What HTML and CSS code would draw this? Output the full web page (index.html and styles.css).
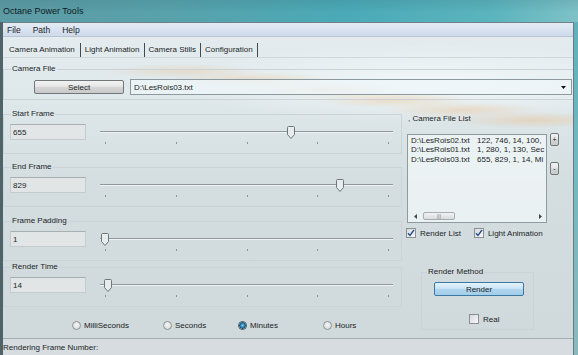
FILE: index.html
```html
<!DOCTYPE html>
<html lang="en">
<head>
    <meta charset="UTF-8">
    <title>Octane Power Tools</title>
    <link rel="stylesheet" href="styles.css">
</head>
<body>
    <div class="window">
        <div class="titlebar">Octane Power Tools</div>
        <div class="frame">
            <div class="client">
                <div class="menubar">
                    <span>File</span>
                    <span>Path</span>
                    <span>Help</span>
                </div>
                <div class="tabs">
                    <span class="tab active">Camera Animation</span>
                    <span class="tab">Light Animation</span>
                    <span class="tab">Camera Stills</span>
                    <span class="tab">Configuration</span>
                </div>
                <div class="panel">
                    <fieldset class="group file-group">
                        <legend>Camera File</legend>
                        <div class="file-row">
                            <button class="btn select">Select</button>
                            <div class="combo">
                                <span>D:\LesRois03.txt</span>
                                <svg width="5" height="3" viewBox="0 0 5 3"><path d="M0 0h5L2.5 3z" fill="#111"/></svg>
                            </div>
                        </div>
                    </fieldset>
                    <div class="columns">
                        <div class="left">
                            <fieldset class="group frame-group g1">
                                <legend>Start Frame</legend>
                                <div class="field-row">
                                    <div class="textbox">655</div>
                                    <div class="slider" style="--v:.655">
                                        <div class="track"></div>
                                        <svg class="thumb" width="8" height="13" viewBox="0 0 8 13"><path d="M1.5.5h5a1 1 0 0 1 1 1v7L4 12.5.5 8.5v-7a1 1 0 0 1 1-1z" fill="#e9eced" stroke="#6c777b"/></svg>
                                        <div class="ticks"><i></i><i></i><i></i><i></i><i></i></div>
                                    </div>
                                </div>
                            </fieldset>
                            <fieldset class="group frame-group g2">
                                <legend>End Frame</legend>
                                <div class="field-row">
                                    <div class="textbox">829</div>
                                    <div class="slider" style="--v:.829">
                                        <div class="track"></div>
                                        <svg class="thumb" width="8" height="13" viewBox="0 0 8 13"><path d="M1.5.5h5a1 1 0 0 1 1 1v7L4 12.5.5 8.5v-7a1 1 0 0 1 1-1z" fill="#e9eced" stroke="#6c777b"/></svg>
                                        <div class="ticks"><i></i><i></i><i></i><i></i><i></i></div>
                                    </div>
                                </div>
                            </fieldset>
                            <fieldset class="group frame-group g3">
                                <legend>Frame Padding</legend>
                                <div class="field-row">
                                    <div class="textbox">1</div>
                                    <div class="slider" style="--v:0">
                                        <div class="track"></div>
                                        <svg class="thumb" width="8" height="13" viewBox="0 0 8 13"><path d="M1.5.5h5a1 1 0 0 1 1 1v7L4 12.5.5 8.5v-7a1 1 0 0 1 1-1z" fill="#e9eced" stroke="#6c777b"/></svg>
                                        <div class="ticks"><i></i><i></i><i></i><i></i><i></i></div>
                                    </div>
                                </div>
                            </fieldset>
                            <fieldset class="group frame-group g4">
                                <legend>Render Time</legend>
                                <div class="field-row">
                                    <div class="textbox">14</div>
                                    <div class="slider" style="--v:.01">
                                        <div class="track"></div>
                                        <svg class="thumb" width="8" height="13" viewBox="0 0 8 13"><path d="M1.5.5h5a1 1 0 0 1 1 1v7L4 12.5.5 8.5v-7a1 1 0 0 1 1-1z" fill="#e9eced" stroke="#6c777b"/></svg>
                                        <div class="ticks"><i></i><i></i><i></i><i></i><i></i></div>
                                    </div>
                                </div>
                            </fieldset>
                            <div class="units">
                                <span class="radio-item"><span class="radio"></span>MilliSeconds</span>
                                <span class="radio-item"><span class="radio"></span>Seconds</span>
                                <span class="radio-item"><span class="radio on"></span>Minutes</span>
                                <span class="radio-item"><span class="radio"></span>Hours</span>
                            </div>
                        </div>
                        <div class="right">
                            <div class="list-caption">, Camera File List</div>
                            <div class="list-row">
                                <div class="listbox">
                                    <div class="list-items">
                                        <div class="item"><span class="name">D:\LesRois02.txt</span><span>122, 746, 14, 100,</span></div>
                                        <div class="item"><span class="name">D:\LesRois01.txt</span><span>1, 280, 1, 130, Sec</span></div>
                                        <div class="item"><span class="name">D:\LesRois03.txt</span><span>655, 829, 1, 14, Mi</span></div>
                                    </div>
                                    <div class="hscroll">
                                        <svg width="3" height="5" viewBox="0 0 3 5"><path d="M3 0v5L0 2.5z" fill="#444"/></svg>
                                        <div class="hthumb"><span>|||</span></div>
                                        <svg class="arr-right" width="3" height="5" viewBox="0 0 3 5"><path d="M0 0v5l3-2.5z" fill="#444"/></svg>
                                    </div>
                                </div>
                                <div class="list-buttons">
                                    <button class="btn small plus">+</button>
                                    <button class="btn small minus">-</button>
                                </div>
                            </div>
                            <div class="checks">
                                <span class="check-item"><span class="checkbox"><svg width="8" height="8" viewBox="0 0 8 8"><path d="M1 4.2l2 2.2L7 1" fill="none" stroke="#23508a" stroke-width="1.4"/></svg></span>Render List</span>
                                <span class="check-item"><span class="checkbox"><svg width="8" height="8" viewBox="0 0 8 8"><path d="M1 4.2l2 2.2L7 1" fill="none" stroke="#23508a" stroke-width="1.4"/></svg></span>Light Animation</span>
                            </div>
                            <fieldset class="group render-group">
                                <legend>Render Method</legend>
                                <div class="render-body">
                                    <button class="btn render">Render</button>
                                    <span class="check-item real"><span class="checkbox"></span>Real</span>
                                </div>
                            </fieldset>
                        </div>
                    </div>
                </div>
                <div class="statusbar">Rendering Frame Number:</div>
            </div>
        </div>
    </div>
</body>
</html>
```

FILE: styles.css
```css
* {
    box-sizing: border-box;
}
body {
    margin: 0;
    font-family: "Liberation Sans", Arial, sans-serif;
    font-size: 8px;
    color: #1c1e1f;
}
.window {
    width: 578px;
    height: 355px;
    display: flex;
    flex-direction: column;
    overflow: hidden;
}
.titlebar {
    height: 22px;
    line-height: 22px;
    padding-left: 3px;
    font-size: 9px;
    color: #0f1a1d;
    background:
        linear-gradient(180deg, rgba(40,90,100,0.15), rgba(255,255,255,0) 60%),
        linear-gradient(90deg, #5d9ba4 0%, #58a2ac 30%, #4aaab7 60%, #5bb4be 85%, #7ec2c7 100%);
}
.frame {
    flex: 1;
    display: flex;
    border-left: 3px solid #4f6369;
    padding-right: 4px;
    background: linear-gradient(180deg, #5eb0ba, #71b9c0 40%, #8ab9bd 100%);
}
.client {
    flex: 1;
    display: flex;
    flex-direction: column;
    border-top: 1px solid #6f8187;
    border-right: 1px solid #6a7c82;
    background:
        radial-gradient(ellipse 80px 7px at 180px 48px, rgba(236,192,140,0.35), rgba(236,192,140,0) 100%),
        radial-gradient(ellipse 80px 8px at 250px 57px, rgba(236,192,140,0.4), rgba(236,192,140,0) 100%),
        radial-gradient(ellipse 80px 8px at 320px 67px, rgba(236,192,140,0.4), rgba(236,192,140,0) 100%),
        radial-gradient(ellipse 80px 8px at 390px 77px, rgba(236,192,140,0.4), rgba(236,192,140,0) 100%),
        radial-gradient(ellipse 80px 8px at 460px 87px, rgba(236,192,140,0.4), rgba(236,192,140,0) 100%),
        radial-gradient(ellipse 80px 8px at 530px 97px, rgba(236,192,140,0.45), rgba(236,192,140,0) 100%),
        radial-gradient(ellipse 260px 40px at 430px 60px, rgba(250,255,255,0.7), rgba(250,255,255,0) 100%),
        linear-gradient(180deg, #e4ecef 0, #dfe8eb 70px, #d4dde0 160px, #cfd8da 100%);
}
.menubar {
    height: 14px;
    display: flex;
    align-items: center;
    gap: 12px;
    padding-left: 4px;
    font-size: 8.5px;
    background: linear-gradient(180deg, #e4ebf5, #cedaea);
    border-bottom: 1px solid #b9c5d3;
}
.tabs {
    height: 20px;
    display: flex;
    align-items: flex-end;
    padding-left: 2px;
}
.tab {
    height: 14px;
    line-height: 13px;
    padding: 0 4px 0 4px;
    border-right: 1px solid #3f4b50;
}
.tab.active {
    padding-left: 4px;
    padding-right: 5px;
}
.panel {
    flex: 1;
    border-top: 1px solid #d0d8db;
}
.group {
    margin: 0;
    padding: 0;
    min-width: 0;
    border: 1px solid #cbd3d6;
}
.group legend {
    padding: 0 1px;
    margin-left: 7px;
    line-height: 12px;
    height: 12px;
}
.file-group {
    margin-top: 5px;
    border-right: 0;
}
.file-row {
    display: flex;
    align-items: center;
    height: 16px;
    margin: 4px 1px 4px 30px;
}
.btn {
    font-family: "Liberation Sans", Arial, sans-serif;
    font-size: 8px;
    color: #1c1e1f;
    padding: 0;
    border: 1px solid #727779;
    border-radius: 2px;
    background: linear-gradient(180deg, #f2f2f2 0%, #e6e6e6 45%, #d4d4d4 55%, #c9c9c9 100%);
}
.select {
    width: 90px;
    height: 14px;
}
.combo {
    flex: 1;
    height: 16px;
    margin-left: 6px;
    display: flex;
    align-items: center;
    justify-content: space-between;
    padding: 0 5px 0 3px;
    border: 1px solid #8c999e;
    background: rgba(238,246,249,0.75);
}
.columns {
    display: flex;
}
.left {
    width: 399px;
}
.frame-group {
    width: 399px;
}
.g1 { margin-top: 8px; }
.g2 { margin-top: 7px; }
.g3 { margin-top: 8px; }
.g4 { margin-top: 0; }
.field-row {
    display: flex;
    padding: 4px 8px 7px 6px;
}
.textbox {
    width: 76px;
    height: 16px;
    line-height: 15px;
    padding-left: 2px;
    border: 1px solid #c5cccf;
    border-top-color: #a7afb2;
    background: rgba(226,229,230,0.9);
}
.slider {
    position: relative;
    flex: 1;
    height: 22px;
    margin-left: 14px;
}
.track {
    position: absolute;
    left: 0;
    right: 0;
    top: 7px;
    height: 2px;
    border-top: 1px solid #8f999d;
    border-bottom: 1px solid #eef2f3;
}
.thumb {
    position: absolute;
    top: 2px;
    left: calc(5px + var(--v) * (100% - 9px));
    transform: translateX(-50%);
}
.ticks {
    position: absolute;
    left: 0;
    right: 0;
    top: 18px;
    display: flex;
    justify-content: space-between;
    padding: 0 4px 0 5px;
}
.ticks i {
    width: 1px;
    height: 2px;
    background: #8b9497;
}
.units {
    display: grid;
    grid-template-columns: 91px 75px 85px auto;
    height: 31px;
    padding: 13px 0 0 69px;
}
.radio-item {
    display: flex;
    align-items: center;
    gap: 3px;
    height: 10px;
}
.radio {
    width: 9px;
    height: 9px;
    border-radius: 50%;
    border: 1px solid #8f9598;
    background: radial-gradient(circle at 50% 40%, #f6f6f6, #d0d3d4);
}
.radio.on {
    border-color: #3a5566;
    background: radial-gradient(circle, #8ed2f4 0, #2a7fb5 2px, #1c5378 3px, #e8eaeb 3.5px, #c8cccd 100%);
}
.right {
    flex: 1;
}
.list-caption {
    margin-top: 13px;
    padding-left: 6px;
    line-height: 12px;
}
.list-row {
    display: flex;
    margin-top: 9px;
}
.listbox {
    width: 140px;
    height: 89px;
    margin-left: 5px;
    display: flex;
    flex-direction: column;
    justify-content: space-between;
    border: 1px solid #8e9a9f;
    background: rgba(240,246,248,0.8);
    overflow: hidden;
}
.list-items {
    padding: 1px 0 0 3px;
    line-height: 9.3px;
    white-space: nowrap;
}
.item .name {
    display: inline-block;
    width: 66px;
}
.hscroll {
    height: 11px;
    display: flex;
    align-items: center;
    padding: 0 4px 1px 6px;
}
.hthumb {
    width: 32px;
    height: 8px;
    margin-left: 6px;
    border: 1px solid #a6adb0;
    border-radius: 2px;
    background: linear-gradient(180deg, #f3f3f3, #d9dbdc);
    font-size: 5px;
    line-height: 6px;
    text-align: center;
    color: #777;
}
.arr-right {
    margin-left: auto;
}
.list-buttons {
    display: flex;
    flex-direction: column;
    margin-left: 3px;
}
.small {
    width: 9px;
    height: 13px;
    line-height: 10px;
    font-size: 7px;
}
.plus {
    margin-top: -1px;
}
.minus {
    margin-top: 16px;
}
.checks {
    display: flex;
    gap: 13px;
    margin-top: 5px;
    padding-left: 4px;
}
.check-item {
    display: flex;
    align-items: center;
    gap: 4px;
    height: 10px;
}
.checkbox {
    width: 10px;
    height: 10px;
    display: flex;
    align-items: center;
    justify-content: center;
    border: 1px solid #8b8f91;
    background: linear-gradient(135deg, #d6d9da, #f8f8f8);
}
.render-group {
    width: 113px;
    margin: 28px 0 0 19px;
}
.render-group legend {
    margin-left: 5px;
}
.render-body {
    padding: 4px 0 5px 12px;
}
.render {
    display: block;
    width: 90px;
    height: 14px;
    border-color: #3c78a6;
    background: linear-gradient(180deg, #e6f3fb 0%, #c9e4f5 45%, #aed5ee 55%, #a3cde8 100%);
}
.real {
    margin: 18px 0 0 35px;
}
.statusbar {
    height: 17px;
    line-height: 17px;
    padding-left: 0;
    border-top: 1px solid #a3acaf;
    background: rgba(214,221,223,0.9);
}
```
